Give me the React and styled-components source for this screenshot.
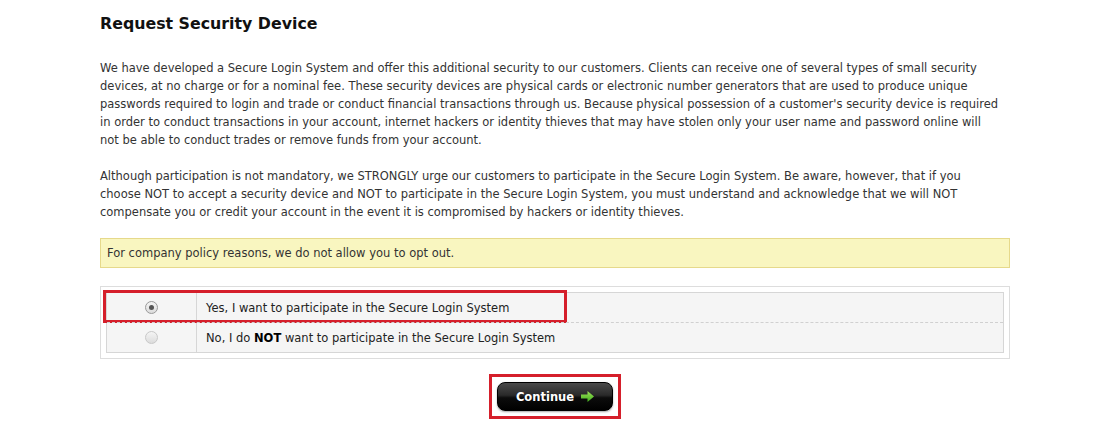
import React from 'react';
import styled, { createGlobalStyle } from 'styled-components';

const GlobalStyle = createGlobalStyle`
  body {
    margin: 0;
    background: #fff;
    font-family: "DejaVu Sans", Verdana, sans-serif;
    color: #333;
  }
`;

const intro = [
  'We have developed a Secure Login System and offer this additional security to our customers. Clients can receive one of several types of small security',
  'devices, at no charge or for a nominal fee. These security devices are physical cards or electronic number generators that are used to produce unique',
  "passwords required to login and trade or conduct financial transactions through us. Because physical possession of a customer's security device is required",
  'in order to conduct transactions in your account, internet hackers or identity thieves that may have stolen only your user name and password online will',
  'not be able to conduct trades or remove funds from your account.',
];

const warning = [
  'Although participation is not mandatory, we STRONGLY urge our customers to participate in the Secure Login System. Be aware, however, that if you',
  'choose NOT to accept a security device and NOT to participate in the Secure Login System, you must understand and acknowledge that we will NOT',
  'compensate you or credit your account in the event it is compromised by hackers or identity thieves.',
];

const Page = styled.div`
  width: 910px;
  margin: 0 auto;
  padding-top: 13px;
`;

const Title = styled.h2`
  margin: 0 0 24px;
  font-size: 15.8px;
  line-height: 22px;
  font-weight: bold;
  color: #111;
`;

const Text = styled.p`
  margin: 0 0 ${p => p.$space || 18}px;
  font-size: 11.5px;
  line-height: 18px;
  color: #333;
`;

const Line = styled.span`
  display: block;
  white-space: nowrap;
`;

const Notice = styled.div`
  background: #f9f6c0;
  border: 1px solid #e6d98b;
  padding: 5px 6px;
  font-size: 11.5px;
  line-height: 18px;
  color: #333;
`;

const OptionsBox = styled.div`
  margin-top: 18px;
  border: 1px solid #ddd;
  padding: 5px;
`;

const OptionsTable = styled.div`
  border: 1px solid #d6d6d6;
  background: #f5f5f5;
`;

const OptionRow = styled.label`
  display: grid;
  grid-template-columns: 90px 1fr;
  height: 29px;
  position: relative;
  border-top: ${p => (p.first ? 'none' : '1px dashed #d0d0d0')};
`;

const RadioCell = styled.div`
  display: flex;
  align-items: center;
  justify-content: center;
  border-right: 1px solid #d6d6d6;
`;

const Radio = styled.span`
  width: 11px;
  height: 11px;
  border-radius: 50%;
  border: 1px solid ${p => (p.checked ? '#9a9a9a' : '#c8c8c8')};
  background: linear-gradient(#f4f4f4, #dcdcdc);
  display: flex;
  align-items: center;
  justify-content: center;

  &::after {
    content: '';
    display: ${p => (p.checked ? 'block' : 'none')};
    width: 5px;
    height: 5px;
    border-radius: 50%;
    background: #555;
  }
`;

const LabelCell = styled.div`
  display: flex;
  align-items: center;
  padding-left: 9px;
  font-size: 11.5px;
  color: #222;

  b {
    color: #000;
  }
`;

const Highlight = styled.span`
  position: absolute;
  left: -4px;
  top: -3px;
  width: 458px;
  height: 27px;
  border: 3px solid #d51f2b;
  pointer-events: none;
`;

const ButtonRow = styled.div`
  display: flex;
  justify-content: center;
  margin-top: 15px;
`;

const ButtonFrame = styled.div`
  border: 3px solid #d51f2b;
  padding: 5px;
`;

const ContinueButton = styled.button`
  display: flex;
  align-items: center;
  gap: 7px;
  width: 116px;
  height: 29px;
  justify-content: center;
  border: 1px solid #000;
  border-radius: 8px;
  background: linear-gradient(#4a4a4a 0%, #2a2a2a 45%, #0c0c0c 55%, #000 100%);
  box-shadow: 0 1px 2px rgba(0, 0, 0, 0.35);
  color: #fff;
  font-family: "DejaVu Sans", Verdana, sans-serif;
  font-size: 11.5px;
  font-weight: bold;
  cursor: pointer;
`;

const Arrow = () => (
  <svg width="13" height="11" viewBox="0 0 13 11">
    <defs>
      <linearGradient id="ag" x1="0" y1="0" x2="0" y2="1">
        <stop offset="0" stopColor="#9fe35a" />
        <stop offset="1" stopColor="#3fae1c" />
      </linearGradient>
    </defs>
    <path d="M0 3.5 H6.5 V0 L13 5.5 L6.5 11 V7.5 H0 Z" fill="url(#ag)" />
  </svg>
);

export default function App() {
  return (
    <Page>
      <GlobalStyle />
      <Title>Request Security Device</Title>
      <Text>
        {intro.map((l, i) => (
          <Line key={i}>{l}</Line>
        ))}
      </Text>
      <Text $space={17}>
        {warning.map((l, i) => (
          <Line key={i}>{l}</Line>
        ))}
      </Text>
      <Notice>For company policy reasons, we do not allow you to opt out.</Notice>
      <OptionsBox>
        <OptionsTable>
          <OptionRow first>
            <RadioCell>
              <Radio checked />
            </RadioCell>
            <LabelCell>Yes, I want to participate in the Secure Login System</LabelCell>
            <Highlight />
          </OptionRow>
          <OptionRow>
            <RadioCell>
              <Radio />
            </RadioCell>
            <LabelCell>
              No, I do&nbsp;<b>NOT</b>&nbsp;want to participate in the Secure Login System
            </LabelCell>
          </OptionRow>
        </OptionsTable>
      </OptionsBox>
      <ButtonRow>
        <ButtonFrame>
          <ContinueButton>
            Continue <Arrow />
          </ContinueButton>
        </ButtonFrame>
      </ButtonRow>
    </Page>
  );
}
